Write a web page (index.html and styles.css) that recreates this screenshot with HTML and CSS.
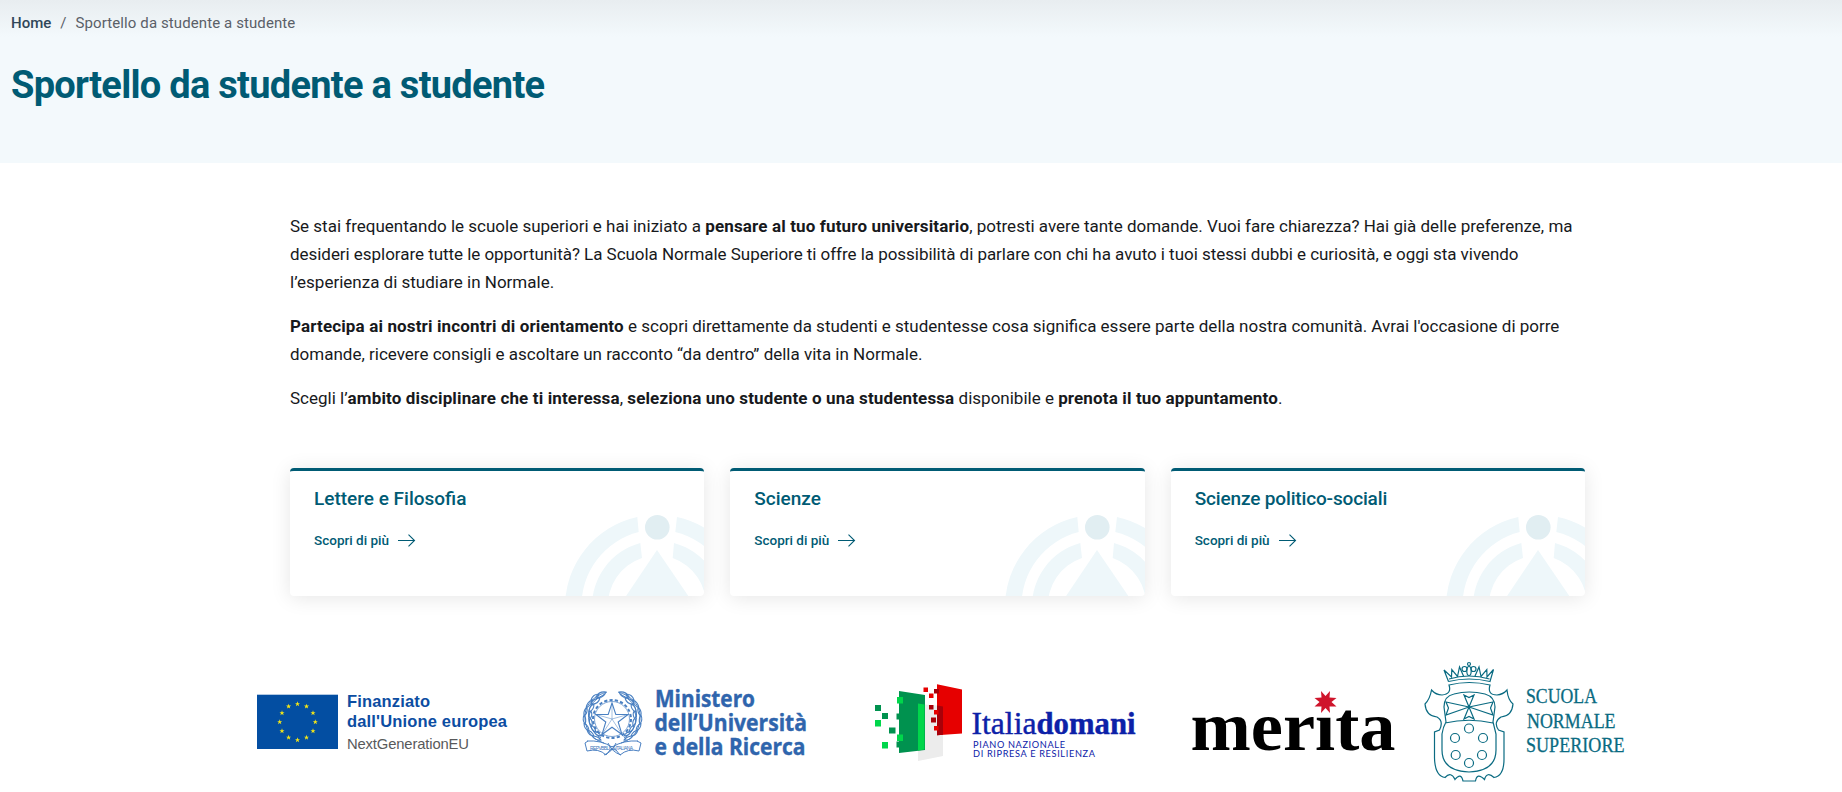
FILE: index.html
```html
<!DOCTYPE html>
<html lang="it">
<head>
<meta charset="utf-8">
<title>Sportello da studente a studente</title>
<link rel="stylesheet" href="styles.css">
</head>
<body>
<svg class="defs" aria-hidden="true">
  <defs>
    <g id="deco">
      <g fill="#eef7fa">
        <path d="M565 608A92 92 0 0 1 637.3 517L638.7 532A76 76 0 0 0 581.5 608Z"/>
        <path d="M677 517A92 92 0 0 1 749.5 608H733A76 76 0 0 0 675.3 532Z"/>
        <path d="M592 608A65.5 65.5 0 0 1 640.3 543L642 558A50 50 0 0 0 608 608Z"/>
        <path d="M674 543A65.5 65.5 0 0 1 722.5 608H706A50 50 0 0 0 672.7 558Z"/>
        <path d="M657 550L696.500 608H618Z"/>
      </g>
      <circle cx="657.3" cy="527.2" r="12.3" fill="#e1eef2"/>
    </g>
    <path id="star" d="M0-2.700L.65-.87 2.550-.83 1.050.33 1.600 2.200 0 1.080-1.600 2.200-1.050.33-2.550-.83-.65-.87Z" fill="#f5e616"/>
    <g id="arrow" fill="none"><path d="M0 6.500H16" stroke="#005b74" stroke-width="1"/><path d="M10.500.7L16.500 6.500 10.500 12.300" stroke="#005b74" stroke-width="1.1"/></g>
  </defs>
</svg>

<header class="hero">
  <nav class="crumbs"><a class="home">Home</a><span class="sep">/</span><span>Sportello da studente a studente</span></nav>
  <h1>Sportello da studente a studente</h1>
</header>

<main class="content">
  <p>Se stai frequentando le scuole superiori e hai iniziato a <b>pensare al tuo futuro universitario</b>, potresti avere tante domande. Vuoi fare chiarezza? Hai già delle preferenze, ma<br><span class="snug">desideri esplorare tutte le opportunità? La Scuola Normale Superiore ti offre la possibilità di parlare con chi ha avuto i tuoi stessi dubbi e curiosità, e oggi sta vivendo</span><br>l’esperienza di studiare in Normale.</p>
  <p><b>Partecipa ai nostri incontri di orientamento</b> e scopri direttamente da studenti e studentesse cosa significa essere parte della nostra comunità. Avrai l'occasione di porre<br>domande, ricevere consigli e ascoltare un racconto “da dentro” della vita in Normale.</p>
  <p>Scegli l’<b>ambito disciplinare che ti interessa</b>, <b>seleziona uno studente o una studentessa</b> disponibile e <b>prenota il tuo appuntamento</b>.</p>

  <div class="cards">
    <article class="card">
      <svg class="deco" viewBox="565 510 139.300 86"><use href="#deco"/></svg>
      <h2>Lettere e Filosofia</h2>
      <a class="more">Scopri di più<svg width="18" height="13"><use href="#arrow"/></svg></a>
    </article>
    <article class="card">
      <svg class="deco" viewBox="565 510 139.300 86"><use href="#deco"/></svg>
      <h2>Scienze</h2>
      <a class="more">Scopri di più<svg width="18" height="13"><use href="#arrow"/></svg></a>
    </article>
    <article class="card">
      <svg class="deco" viewBox="565 510 139.300 86"><use href="#deco"/></svg>
      <h2 class="tight">Scienze politico-sociali</h2>
      <a class="more">Scopri di più<svg width="18" height="13"><use href="#arrow"/></svg></a>
    </article>
  </div>
</main>

<footer class="logos">
  <svg width="303" height="142" viewBox="257 650 303 142">
    <rect x="257" y="694.700" width="81" height="54.300" fill="#034ea2"/>
    <g>
      <use href="#star" x="297.500" y="704"/><use href="#star" x="306.500" y="706.400"/><use href="#star" x="313" y="713"/>
      <use href="#star" x="315.300" y="722"/><use href="#star" x="313" y="731"/><use href="#star" x="306.500" y="737.500"/>
      <use href="#star" x="297.500" y="740"/><use href="#star" x="288.600" y="737.500"/><use href="#star" x="282" y="731"/>
      <use href="#star" x="279.700" y="722"/><use href="#star" x="282" y="713"/><use href="#star" x="288.600" y="706.400"/>
    </g>
    <g class="arial" fill="#0c4da2">
      <text x="347" y="707.300" font-size="16.500" font-weight="700" textLength="83">Finanziato</text>
      <text x="347" y="727.300" font-size="16.500" font-weight="700" textLength="160">dall'Unione europea</text>
      <text x="347" y="749" font-size="14.800" fill="#58595b" textLength="122">NextGenerationEU</text>
    </g>
  </svg>

  <svg width="290" height="142" viewBox="560 650 290 142">
    <g fill="none" stroke="#4a80c2" stroke-width=".8">
      <circle cx="612" cy="719" r="19" stroke-width="2" stroke-dasharray="3.200 2.200"/>
      <circle cx="612" cy="719" r="17.500" stroke-width=".7"/>
      <path d="M612 703L615.800 714.500 628 714.500 618.200 722 622 734.500 612 727.200 602 734.500 605.800 722 596 714.500 608.200 714.500Z" fill="#fff" stroke-width="1.100"/>
      <path d="M612 703V719L628 714.500M612 719L622 734.500M612 719L602 734.500M612 719L596 714.500" stroke-width=".5"/>
      <g id="leafs">
        <path d="M604 743C590 739 584 727 585 714 586 704 595 695 607 692M601 738C592 733 588 724 588.500 714 589 705 595 699 605 694" stroke-width="1"/>
        <path d="M606 692q-7-1-10 5 7 2 10-5M599 694q-6 0-8 6 6 1 8-6M600 698q-7 0-9 6 7 1 9-6M592 700q-5 2-6 8 5-2 6-8M594 704q-5 2-5 8 5-2 5-8M587 707q-4 4-3 9 4-3 3-9M591 711q-3 4-1 8 3-4 1-8M584 715q-2 5 1 9 2-5-1-9M590 718q-2 5 2 8 1-5-2-8M584 723q0 6 5 8 0-5-5-8M591 725q0 5 5 7-1-5-5-7M587 730q2 6 7 6-2-5-7-6M594 731q2 5 7 5-2-4-7-5M592 736q4 5 9 4-3-4-9-4" stroke-width="1.100"/>
      </g>
      <use href="#leafs" transform="matrix(-1 0 0 1 1225 0)"/>
      <path d="M588 741l-3 2 2 8q12-3 19 4l4-5q4-1 6 0l4 5q8-7 19-4l2-8-4-2M587 741q14-1 25 6 12-7 26-6M604 755q8-3 12-12M621 755q-9-3-13-12" stroke-width="1"/>
    </g>
    <text x="590" y="750" class="arial" font-size="5" fill="#3f77bb" textLength="43">REPVBBLICA ITALIANA</text>
    <g class="gov">
      <text x="655" y="706.500" textLength="100" lengthAdjust="spacingAndGlyphs">Ministero</text>
      <text x="654.500" y="731" textLength="152.500" lengthAdjust="spacingAndGlyphs">dell’Università</text>
      <text x="654.500" y="754.700" textLength="151" lengthAdjust="spacingAndGlyphs">e della Ricerca</text>
    </g>
  </svg>

  <svg width="320" height="142" viewBox="850 650 320 142">
    <path d="M918 704L943 706V756L918 761Z" fill="#ececec"/>
    <path d="M899 691L925 695V750L899 753Z" fill="#00924f"/>
    <path d="M918 703.500L924.500 704.500V749.500L918 750.500Z" fill="#00d64b"/>
    <path d="M937 684.300L962 689.500V733.500L937 735.300Z" fill="#e60000"/>
    <path d="M937 705.500L943 706.500V734.800L937 735.300Z" fill="#a80009"/>
    <g fill="#00924f"><path d="M875 705h6v6h-6zM882 713h6v6h-6zM889 727.500h6.500v6h-6.500zM896.500 713.500h4v6h-4zM896.500 741.500h4v6h-4z"/></g>
    <g fill="#00d64b"><path d="M875 720h6v6.500h-6zM882 742h6v6.500h-6zM897 697h6v6.500h-6zM897 734.500h6v6.500h-6z"/></g>
    <g fill="#e60000"><path d="M923.500 687.500h4.500v4.500h-4.500zM929 693.500h4.500v4.500h-4.500zM934 710h4.500v4.500h-4.500zM934 726h4.500v4.500h-4.500z"/></g>
    <g fill="#a80009"><path d="M934 689h5v4.500h-5zM929 705h4.500v4.500h-4.500zM931 717.500h5v5h-5z"/></g>
    <g fill="#0c21a8">
      <text x="971.500" y="734.300" class="serif" font-size="30.500" stroke="#0c21a8" stroke-width=".4" textLength="65" lengthAdjust="spacingAndGlyphs">Italia</text>
      <text x="1036.500" y="734.300" class="serif" font-size="30.500" font-weight="700" stroke="#0c21a8" stroke-width=".4" textLength="99" lengthAdjust="spacingAndGlyphs">domani</text>
      <text x="973" y="748" class="lato" font-size="9.200" textLength="92">PIANO NAZIONALE</text>
      <text x="973" y="756.600" class="lato" font-size="9.200" textLength="122">DI RIPRESA E RESILIENZA</text>
    </g>
  </svg>

  <svg width="235" height="142" viewBox="1170 650 235 142">
    <text x="1190.500" y="750" class="serif" font-size="69" font-weight="700" textLength="205" lengthAdjust="spacingAndGlyphs">merıta</text>
    <path d="M1325.500 696L1330 691 1329.500 697.500 1336.500 698 1331.500 702 1336.500 706.500 1329.500 706.500 1330 713 1325.500 708 1321 713 1321.500 706.500 1314.500 706.500 1319.500 702 1314.500 698 1321.500 697.500 1321 691Z" fill="#cf142b"/>
  </svg>

  <svg width="250" height="142" viewBox="0 0 250 142">
    <!-- crest -->
    <g transform="translate(5 0)" fill="none" stroke="#0a6b82" stroke-width="1.200">
      <path d="M38.500 31.500L34 20 41.500 27 41.800 19.500 47.500 26.500 49.500 17 53.500 26M65 26L69 17 71 26.500 76.800 19.500 77 27 83.500 19.500 80 31.500Q59 26.500 38.500 31.500M39 29Q59 23 79.500 29"/>
      <circle cx="59" cy="14" r="1.500"/><circle cx="54.500" cy="19" r="2.500"/><circle cx="63.500" cy="19" r="2.500"/><ellipse cx="59" cy="21" rx="2.200" ry="4.500"/>
      <path d="M39 35Q59 30 80 35Q77 45 87 45Q93 44.500 97 40Q98 50 103 54Q102 66 91 67Q83 72 88.500 80L94 82V109Q94 126 84 127.500Q77 121 74.500 129.500Q67 122 65.500 131H53Q51 122 45 129.500Q41 121 35 127.500Q25 126 24.500 108V82L29.500 80Q34 71 27 67Q16 66 15 54Q20 49 21.500 40Q26 45 32 45Q42 44 39 35Z"/>
      <path d="M34 57Q34 46 44 44Q59 40 75 44Q85 47 85 57L83 72Q84 76 86 84V100Q86 121 59 122Q32 121 32 100V84Q33 77 36 72ZM35 73Q59 67.500 83 73"/>
      <path d="M59 57L54 45 59 47.500 64 45ZM59 57L54 69 59 66.500 64 69ZM59 57L36 52 38.500 58 36 65ZM59 57L83 52 80.500 58 83 65Z"/>
      <circle cx="59" cy="78.500" r="4.500"/><circle cx="45" cy="88" r="4.500"/><circle cx="73" cy="88" r="4.500"/><circle cx="45.700" cy="105" r="4.500"/><circle cx="72" cy="105" r="4.500"/><circle cx="59" cy="113" r="4.500"/>
    </g>
    <g transform="translate(5 0)" class="sns">
      <text x="116" y="53.300" textLength="71" lengthAdjust="spacingAndGlyphs">SCUOLA</text>
      <text x="117" y="78.300" textLength="88.500" lengthAdjust="spacingAndGlyphs">NORMALE</text>
      <text x="116" y="102.200" textLength="98.500" lengthAdjust="spacingAndGlyphs">SUPERIORE</text>
    </g>
  </svg>
</footer>
</body>
</html>
```
FILE: styles.css
```css
* { box-sizing: border-box; }
body {
  margin: 0;
  background: #fff;
  color: #17191c;
  font-family: Roboto, "Liberation Sans", sans-serif;
  overflow-x: hidden;
}
.defs { display: block; width: 0; height: 0; }

.hero {
  height: 163px;
  padding: 11px 11px 0;
  background: linear-gradient(#e8edf0, #f3f9fc 37px);
}
.crumbs {
  display: flex;
  font-size: 15px;
  line-height: 24px;
  letter-spacing: .1px;
  color: #5a6068;
}
.home { font-weight: 500; letter-spacing: 0; color: #30475a; }
.sep { margin: 0 9px; }
h1 {
  margin: 26px 0 0;
  font-size: 38px;
  line-height: 48px;
  font-weight: 700;
  letter-spacing: -.72px;
  color: #005b74;
}

.content { padding: 49px 257px 0 290px; }
p {
  margin: 0 0 16px;
  font-size: 17px;
  line-height: 28px;
  white-space: nowrap;
}
p b { font-weight: 700; letter-spacing: .14px; }
.snug { letter-spacing: -.04px; }

.cards {
  display: grid;
  grid-template-columns: repeat(3, 1fr);
  gap: 26px;
  margin-top: 56px;
}
.card {
  position: relative;
  height: 128px;
  padding: 15px 24px;
  border-top: 3px solid #005b74;
  border-radius: 4px;
  overflow: hidden;
  background: #fff;
  box-shadow: 0 2px 20px rgba(0, 0, 0, .1);
}
.deco { position: absolute; right: 0; bottom: 0; width: 139.300px; height: 86px; }
h2 {
  margin: 0;
  font-size: 19px;
  line-height: 26px;
  font-weight: 500;
  color: #005b74;
}
h2.tight { letter-spacing: -.15px; }
.more {
  display: flex;
  align-items: center;
  gap: 9px;
  margin-top: 18px;
  font-size: 13.500px;
  line-height: 20px;
  font-weight: 500;
  color: #005b74;
}

.logos { display: flex; margin-top: 54px; padding-left: 257px; }
.logos svg { display: block; flex: none; }
.arial { font-family: "Liberation Sans", Arial, sans-serif; }
.serif { font-family: "Liberation Serif", serif; }
.lato { font-family: Lato, sans-serif; }
.gov { font: 700 22.500px "Open Sans", sans-serif; fill: #2f65ad; stroke: #2f65ad; stroke-width: .4; }
.sns { font: 20.500px "Liberation Serif", serif; fill: #0a6b82; stroke: #0a6b82; stroke-width: .3; }
```
